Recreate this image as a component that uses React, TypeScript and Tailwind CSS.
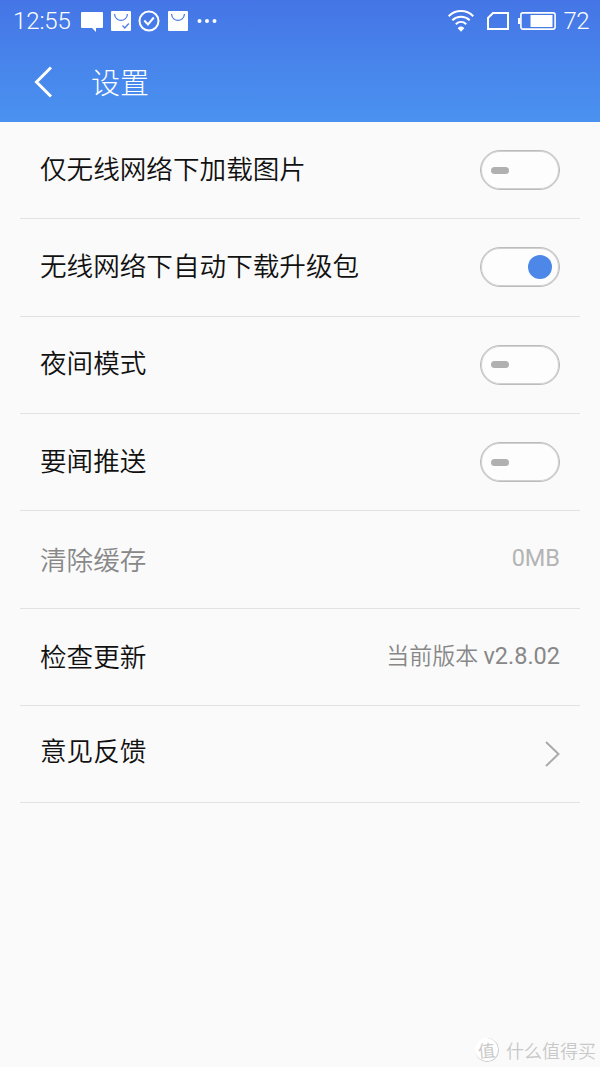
import type { ReactNode } from 'react'

interface SettingRow {
  label: string
  labelClass?: string
  control: ReactNode
}

function Toggle({ on = false }: { on?: boolean }) {
  return (
    <button
      role="switch"
      aria-checked={on}
      className={`flex h-10 w-20 items-center rounded-full border border-[#bcbcbc] bg-[#fdfdfd] ring-1 ring-inset ring-[#bcbcbc]/70 ${on ? 'justify-end pr-[7px]' : 'justify-start pl-2.5'}`}
    >
      {on ? (
        <span className="size-6 rounded-full bg-[#4d88e8]" />
      ) : (
        <span className="h-[7px] w-[18px] rounded-full bg-[#b0b0b0]" />
      )}
    </button>
  )
}

function BagIcon({ checked = false }: { checked?: boolean }) {
  return (
    <svg width="20" height="20" viewBox="0 0 20 20" fill="none">
      <rect width="20" height="20" rx="1" fill="#fff" />
      <path d="M3.500 3C4.500 11.500 15.500 11.500 16.500 3" stroke="#4a7be6" strokeWidth="1.300" />
      {checked && <path d="M11.500 14.500l2.300 2.500 4-4.500" stroke="#4a7be6" strokeWidth="1.300" />}
    </svg>
  )
}

function StatusBar() {
  return (
    <div className="flex h-[42px] items-center justify-between pl-[13px] pr-[11px] font-['Roboto',sans-serif] text-[24px] font-[350] text-white">
      <div className="flex items-center">
        <span className="w-[68px] tracking-[-0.100px]">12:55</span>
        <svg width="22" height="20" viewBox="0 0 22 20" className="mt-px">
          <path d="M1 0h20a1 1 0 0 1 1 1v14a1 1 0 0 1-1 1h-6v4l-4-4H1a1 1 0 0 1-1-1V1a1 1 0 0 1 1-1z" fill="#fff" />
        </svg>
        <span className="ml-2">
          <BagIcon checked />
        </span>
        <svg width="22" height="22" viewBox="0 0 22 22" fill="none" stroke="#fff" strokeWidth="2" className="ml-[7px]">
          <circle cx="11" cy="11" r="9.500" />
          <path d="M6.300 10.500l3.700 4 5.800-7" />
        </svg>
        <span className="ml-2">
          <BagIcon />
        </span>
        <svg width="20" height="4" viewBox="0 0 20 4" fill="#fff" className="ml-[9px]">
          <circle cx="2.500" cy="2" r="2" />
          <circle cx="10" cy="2" r="2" />
          <circle cx="17.500" cy="2" r="2" />
        </svg>
      </div>
      <div className="flex items-center">
        <svg width="26" height="22" viewBox="0 0 26 22" fill="none" stroke="#fff" strokeWidth="2">
          <path d="M.7 6.200C7.500-.7 18.500-.7 25.300 6.200" />
          <path d="M4.300 10.200c5-4.600 12.400-4.600 17.400 0" />
          <path d="M7.800 14.200c3.100-2.900 7.300-2.900 10.400 0" />
          <path d="M9.700 18.200c1.500-2.200 5.100-2.200 6.600 0L13 21.700z" fill="#fff" stroke="none" />
        </svg>
        <svg width="22" height="18" viewBox="0 0 22 18" fill="none" stroke="#fff" strokeWidth="2" className="ml-[13px]">
          <path d="M6 1h15v16H1V6z" />
        </svg>
        <svg width="38" height="18" viewBox="0 0 38 18" fill="none" className="ml-[9px]">
          <rect x="2.900" y="0.900" width="34.200" height="16.200" rx="2" stroke="#fff" strokeWidth="1.600" />
          <path d="M0 6h2v6H0z" fill="#fff" />
          <path d="M12.500 3h22v12h-22z" fill="#fff" />
        </svg>
        <span className="ml-[7px] tracking-[-0.500px]">72</span>
      </div>
    </div>
  )
}

const version = (
  <span className="mb-1 text-[23px] leading-8 text-[#888]">
    当前版本 <span className="font-['Roboto',sans-serif] text-[23.500px] font-normal">v2.8.02</span>
  </span>
)

const rows: SettingRow[] = [
  { label: '仅无线网络下加载图片', labelClass: 'mb-[5px]', control: <Toggle /> },
  { label: '无线网络下自动下载升级包', labelClass: 'mb-[5px]', control: <Toggle on /> },
  { label: '夜间模式', labelClass: 'mb-[5px]', control: <Toggle /> },
  { label: '要闻推送', labelClass: 'mb-[5px]', control: <Toggle /> },
  {
    label: '清除缓存',
    labelClass: 'text-[#888]',
    control: <span className="mb-0.5 font-['Roboto',sans-serif] text-[23.500px] font-normal text-[#b4b4b4]">0MB</span>,
  },
  { label: '检查更新', labelClass: 'mb-px', control: version },
  {
    label: '意见反馈',
    labelClass: 'mb-[8px]',
    control: (
      <svg width="15" height="26" viewBox="0 0 15 26" fill="none" stroke="#aaa" strokeWidth="2">
        <path d="M1 1l12.500 12L1 25" />
      </svg>
    ),
  },
]

export default function App() {
  return (
    <div className="flex h-[1067px] w-[600px] flex-col bg-[#fafafa] font-['Noto_Sans_CJK_SC',sans-serif] font-[350] text-[#111]">
      <header className="h-[122px] bg-linear-to-b from-[#4575e6] to-[#4a92f0] text-white">
        <StatusBar />
        <div className="flex h-20 items-center pl-[34px]">
          <svg width="19" height="32" viewBox="0 0 19 32" fill="none" stroke="#fff" strokeWidth="3">
            <path d="M17 1.500L2.500 16 17 30.500" />
          </svg>
          <h1 className="mb-0.5 ml-[38px] text-[29px] leading-10 font-light">设置</h1>
        </div>
      </header>

      <main className="px-5">
        {rows.map((row) => (
          <div key={row.label} className="flex h-[97.330px] items-center justify-between border-b border-[#e2e2e2] px-5">
            <span className={`text-[26.600px] leading-10 ${row.labelClass ?? ''}`}>{row.label}</span>
            {row.control}
          </div>
        ))}
      </main>

      {/* Watermark */}
      <footer className="mt-auto flex items-center justify-end gap-[7px] pr-1 pb-[5px] text-[#c8c8c8]">
        <span className="flex size-6 -rotate-6 items-center justify-center rounded-full border-r border-b border-[#ccc] bg-white text-[17px] leading-none font-normal">
          值
        </span>
        <span className="text-[18px] leading-6">什么值得买</span>
      </footer>
    </div>
  )
}
